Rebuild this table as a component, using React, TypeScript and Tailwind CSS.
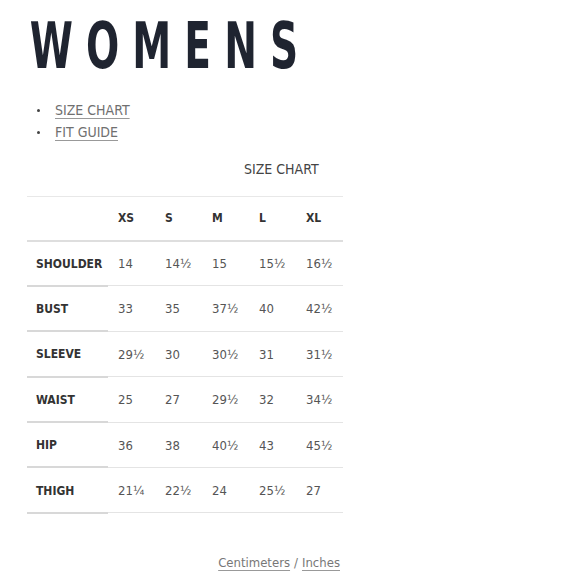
import React from "react";

const sizes = ["XS", "S", "M", "L", "XL"];

const rows: { label: string; values: string[] }[] = [
  { label: "SHOULDER", values: ["14", "14½", "15", "15½", "16½"] },
  { label: "BUST", values: ["33", "35", "37½", "40", "42½"] },
  { label: "SLEEVE", values: ["29½", "30", "30½", "31", "31½"] },
  { label: "WAIST", values: ["25", "27", "29½", "32", "34½"] },
  { label: "HIP", values: ["36", "38", "40½", "43", "45½"] },
  { label: "THIGH", values: ["21¼", "22½", "24", "25½", "27"] },
];

const App = () => {
  return (
    <div className="w-[580px] h-[580px] bg-white font-['DejaVu_Sans_Condensed','Liberation_Sans_Narrow','DejaVu_Sans',sans-serif] text-[#333]">
      <div className="pl-[27px] pt-[10px] w-[343px]">
        {/* Title */}
        <h1 className="text-[64px] leading-[72px] font-bold tracking-[0.3em] text-[#1f2430] pl-[4px] origin-left scale-x-[0.68] whitespace-nowrap">
          WOMENS
        </h1>

        {/* Links */}
        <ul className="mt-[20px] flex flex-col gap-[5px] text-[14px] text-[#707070]">
          {["SIZE CHART", "FIT GUIDE"].map((item) => (
            <li key={item} className="flex items-center h-[17px]">
              <span className="w-[3px] h-[3px] rounded-full bg-[#444] ml-[10px] mr-[15px]" />
              <a href="#" className="underline underline-offset-[3px] decoration-[#999]">
                {item}
              </a>
            </li>
          ))}
        </ul>

        {/* Size chart heading */}
        <div className="mt-[18px] pl-[217px] text-[14px] text-[#444]">SIZE CHART</div>

        {/* Table */}
        <table className="mt-[16px] w-[316px] border-collapse text-[13px]">
          <thead>
            <tr className="h-[44px] border-t border-[#e8e8e8]">
              <th className="w-[81px] border-b-2 border-[#dedede]" />
              {sizes.map((s) => (
                <th
                  key={s}
                  className="text-left text-[12px] font-bold text-[#333] pl-[10px] border-b-2 border-[#dedede]"
                >
                  {s}
                </th>
              ))}
            </tr>
          </thead>
          <tbody>
            {rows.map((row) => (
              <tr key={row.label} className="h-[45.4px]">
                <th className="text-left text-[12px] font-bold text-[#333] pl-[9px] pt-[1px] border-b-2 border-[#d8d8d8]">
                  {row.label}
                </th>
                {row.values.map((v, i) => (
                  <td
                    key={i}
                    className="pl-[10px] pt-[1px] text-[#555] border-b border-[#e4e4e4]"
                  >
                    {v}
                  </td>
                ))}
              </tr>
            ))}
          </tbody>
        </table>

        {/* Units */}
        <div className="mt-[39px] flex justify-end pr-[3px] text-[13px] text-[#777]">
          <a href="#" className="underline underline-offset-[3px] decoration-[#999]">
            Centimeters
          </a>
          <span className="mx-[4px]">/</span>
          <a href="#" className="underline underline-offset-[3px] decoration-[#999]">
            Inches
          </a>
        </div>
      </div>
    </div>
  );
};

export default App;
